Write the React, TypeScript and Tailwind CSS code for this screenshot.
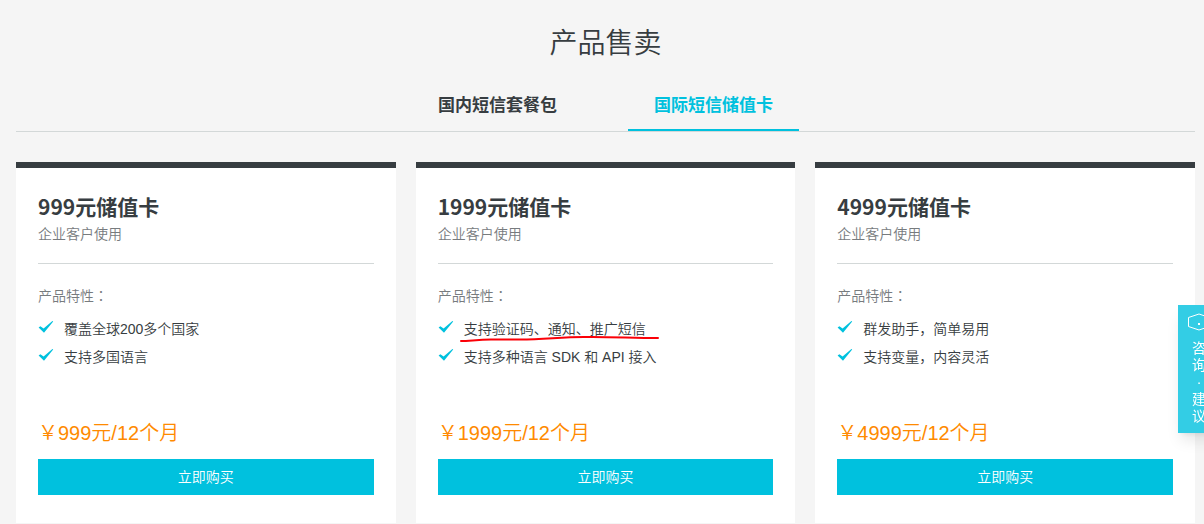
import React, { useState } from 'react';

const tabs = ['国内短信套餐包', '国际短信储值卡'];

const cards = [
  {
    title: '999元储值卡',
    price: '￥999元/12个月',
    features: [{ text: '覆盖全球200多个国家' }, { text: '支持多国语言' }],
  },
  {
    title: '1999元储值卡',
    price: '￥1999元/12个月',
    features: [{ text: '支持验证码、通知、推广短信', marked: true }, { text: '支持多种语言 SDK 和 API 接入' }],
  },
  {
    title: '4999元储值卡',
    price: '￥4999元/12个月',
    features: [{ text: '群发助手，简单易用' }, { text: '支持变量，内容灵活' }],
  },
];

type Feature = { text: string; marked?: boolean };
type CardProps = { title: string; price: string; features: Feature[] };

const CheckIcon = () => (
  <svg className="w-4 h-4 shrink-0 -mt-1" viewBox="0 0 16 16" fill="#00c1de" aria-hidden="true">
    <path d="M0.6 8.4 L2.4 7.2 L5.6 9.4 L14.4 2 L15.2 2.4 L6 13.8 Z" />
  </svg>
);

const Card = ({ title, price, features }: CardProps) => {
  return (
    <div className="bg-white border-t-6 border-[#373d41] px-[22px] pt-6 pb-7">
      <h2 className="text-[21px] leading-7 font-bold font-['Noto_Sans_CJK_SC',sans-serif]">{title}</h2>
      <p className="mt-[2px] text-sm leading-6 text-[#777b7e]">企业客户使用</p>
      <hr className="mt-[17px] border-[#d3d8d8]" />

      {/* Features */}
      <p className="mt-5 text-sm leading-6 text-[#777b7e]">
        产品特性<span className="leading-none font-['Noto_Sans_CJK_TC',sans-serif]">：</span>
      </p>
      <ul className="mt-[7px]">
        {features.map((feature) => (
          <li key={feature.text} className="flex items-center gap-[10px] text-sm leading-7">
            <CheckIcon />
            <span className="relative">
              {feature.text}
              {feature.marked && (
                <svg className="absolute -left-1 bottom-0 w-[200px] h-2" viewBox="0 0 200 8" fill="none" stroke="#fb0007" strokeWidth="2" strokeLinecap="round" aria-hidden="true">
                  <path d="M1 6 C10 6 18 4.5 32 4.6 H60 C85 4.6 100 2 124 2 C150 1.6 172 3 198 3" />
                </svg>
              )}
            </span>
          </li>
        ))}
      </ul>

      <p className="mt-12 text-xl leading-7 text-[#ff8a00]">{price}</p>
      <button type="button" className="mt-3 w-full h-9 bg-[#00c1de] text-sm text-white cursor-pointer">立即购买</button>
    </div>
  );
};

const App = () => {
  const [active, setActive] = useState(1);

  return (
    <div className="min-h-screen bg-[#f5f5f5] pl-4 pr-[9px] pt-6 text-[#373d41] font-[350] font-['Liberation_Sans','Noto_Sans_CJK_SC',sans-serif]">
      <h1 className="text-center text-[28px] leading-10 font-[350]">产品售卖</h1>

      {/* Tabs */}
      <div role="tablist" className="mt-4 flex justify-center gap-[45px] border-b border-[#d3d8d8]">
        {tabs.map((tab, i) => (
          <button
            key={tab}
            type="button"
            role="tab"
            aria-selected={active === i}
            onClick={() => setActive(i)}
            className={`h-[51px] px-[26px] pt-[2px] border-b-2 text-[17px] font-bold cursor-pointer ${active === i ? 'border-[#00c1de] text-[#00c1de]' : 'border-transparent'}`}
          >
            {tab}
          </button>
        ))}
      </div>

      {/* Cards */}
      <div className="mt-[30px] grid grid-cols-3 gap-5">
        {cards.map((card) => (
          <Card key={card.title} {...card} />
        ))}
      </div>

      {/* Feedback */}
      <a href="#feedback" className="fixed top-[305px] -right-4 w-[42px] flex flex-col items-center py-2 bg-[#33cde5] text-sm leading-[17px] font-normal text-white shadow-lg">
        <svg className="w-6 h-[18px] mb-[9px]" viewBox="0 0 24 18" fill="none" stroke="white" aria-hidden="true">
          <path d="M1.5 4.5 L12 1 L22.5 4.5 V13.5 L12 17 L1.5 13.5 Z" />
          <path d="M11 11 h2 M17 11 h2" strokeWidth="2" />
        </svg>
        <span>咨</span>
        <span>询</span>
        <span>·</span>
        <span>建</span>
        <span>议</span>
      </a>
    </div>
  );
};

export default App;
